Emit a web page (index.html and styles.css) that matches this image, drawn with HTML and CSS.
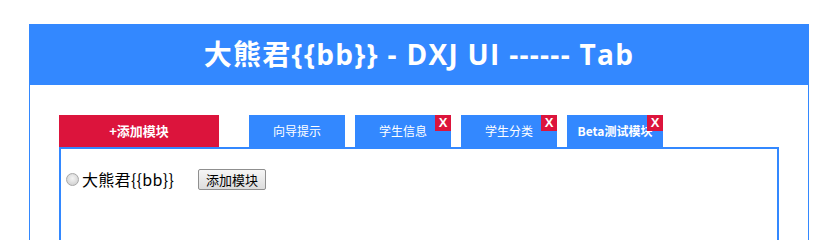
FILE: index.html
```html
<!DOCTYPE html>
<html lang="zh">
<head>
<meta charset="utf-8">
<title>Tab</title>
<link rel="stylesheet" href="styles.css">
</head>
<body>
<div class="box">
  <div class="head">大熊君{{bb}} - DXJ UI ------ Tab</div>
  <div class="body">
    <div class="tabs">
      <div class="tab add">+添加模块</div>
      <div class="tab">向导提示</div>
      <div class="tab">学生信息<span class="close">X</span></div>
      <div class="tab">学生分类<span class="close">X</span></div>
      <div class="tab bold">Beta测试模块<span class="close">X</span></div>
    </div>
    <div class="panel">
      <div class="row">
        <input type="radio" class="radio" name="r">
        <span class="label">大熊君{{bb}}</span>
        <button class="btn" type="button">添加模块</button>
      </div>
    </div>
  </div>
</div>
</body>
</html>
```

FILE: styles.css
```css
html, body {
  margin: 0;
  padding: 0;
  background: #fff;
}
.box {
  margin: 24px 0 0 29px;
  width: 778px;
  border: 1px solid #3388ff;
  border-top: 0;
  font-family: "Noto Sans CJK SC", sans-serif;
}
.head {
  height: 61px;
  margin: 0 -1px;
  background: #3388ff;
  color: #fff;
  font-family: "Open Sans", "Noto Sans CJK SC", sans-serif;
  font-weight: bold;
  font-size: 28px;
  letter-spacing: 1.3px;
  line-height: 60px;
  text-align: center;
}
.body {
  padding: 30px 29px 0 29px;
}
.tabs {
  display: flex;
  gap: 10px;
  height: 32px;
}
.tab {
  position: relative;
  width: 96px;
  height: 32px;
  background: #3388ff;
  color: #fff;
  font-size: 12px;
  line-height: 32px;
  text-align: center;
}
.tab.add {
  width: 160px;
  margin-right: 20px;
  background: #dc143c;
  font-weight: bold;
  font-size: 13px;
}
.tab.bold {
  font-weight: bold;
}
.close {
  position: absolute;
  top: 0;
  right: 0;
  width: 16px;
  height: 16px;
  background: #dc143c;
  color: #fff;
  font-family: "Liberation Sans", sans-serif;
  font-weight: bold;
  font-size: 13px;
  line-height: 16px;
  text-align: center;
}
.panel {
  width: 716px;
  height: 200px;
  border: 2px solid #3388ff;
}
.row {
  display: flex;
  align-items: center;
  padding-top: 18px;
  height: 24px;
}
.radio {
  appearance: none;
  -webkit-appearance: none;
  box-sizing: border-box;
  margin: 0 3px 0 5px;
  width: 13px;
  height: 13px;
  border: 1px solid #a8a8a8;
  border-radius: 50%;
  background: radial-gradient(circle at 50% 40%, #f4f4f4 0%, #d6d6d6 70%, #c8c8c8 100%);
}
.label {
  font-family: "Noto Sans CJK SC", serif;
  font-size: 16px;
  letter-spacing: 0.3px;
  color: #000;
}
.btn {
  margin-left: 24px;
  width: 68px;
  height: 21px;
  padding: 0;
  font-family: "Noto Sans CJK SC", sans-serif;
  font-size: 13px;
  color: #000;
  background: linear-gradient(#f6f6f6, #dddddd);
  border: 1px solid #8f8f8f;
  border-radius: 2px;
}
```
